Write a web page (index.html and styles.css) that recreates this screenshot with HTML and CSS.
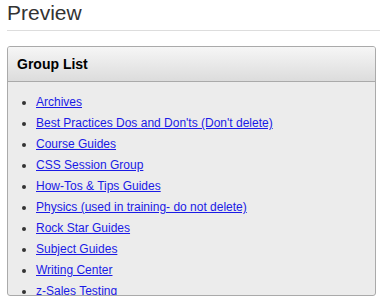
FILE: index.html
```html
<!DOCTYPE html>
<html lang="en">
<head>
  <meta charset="UTF-8">
  <title>Preview</title>
  <link rel="stylesheet" href="styles.css">
</head>
<body>
  <div class="page">
    <h1 class="title">Preview</h1>
    <div class="panel">
      <div class="panel-head">Group List</div>
      <div class="panel-body">
        <ul class="group-list">
          <li><a href="#">Archives</a></li>
          <li><a href="#">Best Practices Dos and Don'ts (Don't delete)</a></li>
          <li><a href="#">Course Guides</a></li>
          <li><a href="#">CSS Session Group</a></li>
          <li><a href="#">How-Tos &amp; Tips Guides</a></li>
          <li><a href="#">Physics (used in training- do not delete)</a></li>
          <li><a href="#">Rock Star Guides</a></li>
          <li><a href="#">Subject Guides</a></li>
          <li><a href="#">Writing Center</a></li>
          <li><a href="#">z-Sales Testing</a></li>
        </ul>
      </div>
    </div>
  </div>
</body>
</html>
```

FILE: styles.css
```css
body {
  margin: 0;
  font-family: "Liberation Sans", Arial, sans-serif;
  background: #fff;
  color: #333;
  overflow: hidden;
}
.page {
  padding-left: 7px;
}
.title {
  margin: 0;
  padding: 2px 0 6px;
  font-size: 21px;
  font-weight: normal;
  line-height: 22px;
  color: #333;
  border-bottom: 1px solid #ddd;
}
.panel {
  margin: 15px 4px 0 0;
  height: 248px;
  border: 1px solid #aaa;
  border-radius: 3px;
  background: #ececec;
  overflow: hidden;
}
.panel-head {
  height: 34px;
  line-height: 34px;
  padding-left: 9px;
  font-size: 14px;
  font-weight: bold;
  color: #000;
  background: linear-gradient(#f6f6f6, #dcdcdc);
  border-bottom: 1px solid #aaa;
}
.panel-body {
  padding-top: 10px;
}
.group-list {
  margin: 0;
  padding-left: 28px;
  font-size: 12px;
  line-height: 21px;
}
.group-list a {
  color: #1a1ae6;
}
```
